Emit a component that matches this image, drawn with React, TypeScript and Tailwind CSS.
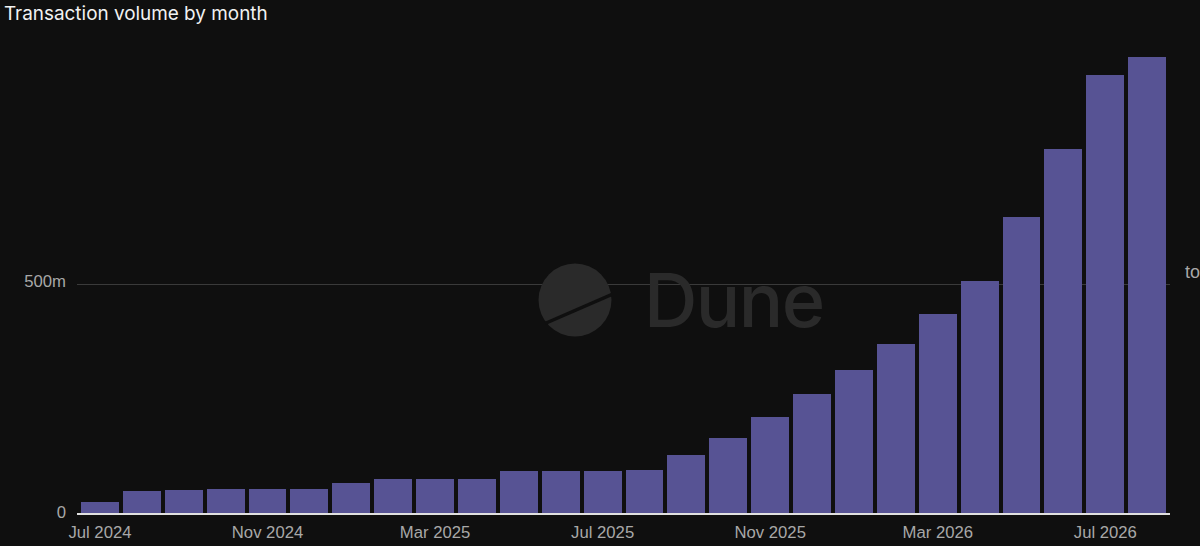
const tops = [502, 490.5, 489.5, 489, 489, 489, 483, 478.5, 478.5, 478.5, 470.5, 470.5, 470.5, 470, 455, 437.5, 417, 394, 370, 344, 314, 281, 217, 149, 74.5, 57];
const BASE = 514;
const labels: Record<number, string> = { 0: "Jul 2024", 4: "Nov 2024", 8: "Mar 2025", 12: "Jul 2025", 16: "Nov 2025", 20: "Mar 2026", 24: "Jul 2026" };

function Watermark() {
  return (
    <div className="absolute left-[461px] top-[233px] flex items-center">
      <svg width="74" height="74" viewBox="0 0 74 74" className="block">
        <circle cx="37" cy="37" r="36.5" fill="#2a2a2a" />
        <path d="M7 60.5 L75 31" stroke="#0f0f0f" strokeWidth="3.4" fill="none" />
      </svg>
      <span className="ml-[32px] text-[74px] leading-none tracking-[-1.6px] font-medium text-[#2a2a2a] font-['Inter',sans-serif]">Dune</span>
    </div>
  );
}

export default function App() {
  return (
    <div className="flex h-[546px] w-[1200px] flex-col overflow-hidden bg-[#0f0f0f] font-['Liberation_Sans',Arial,sans-serif]">
      <div className="h-[30px] pl-[4px] text-[18.9px] leading-[27px] text-[#f2f2f2] font-['Inter',sans-serif]">Transaction volume by month</div>
      <div className="flex">
        <div className="flex h-[484px] w-[77px] flex-col items-end pr-[11px] text-[16.7px] leading-[18px] text-[#a8a8a8]">
          <div className="mt-[243px]">500m</div>
          <div className="mt-[213px]">0</div>
        </div>
        <div className="relative h-[484px] w-[1093px]">
          <div className="absolute left-0 right-0 top-[253.5px] h-px bg-[#3a3a3a]" />
          <Watermark />
          <div className="relative flex h-full items-end gap-[4px] px-[4px]">
            {tops.map((t, i) => (
              <div key={i} className="flex-1 bg-[#575394]" style={{ height: BASE - t }} />
            ))}
          </div>
          <div className="absolute bottom-[-1px] left-0 right-0 h-[2px] bg-[#e0e0e0]" />
        </div>
        <div className="min-w-0 flex-1 overflow-hidden whitespace-nowrap pl-[15px] pt-[232px] text-[18px] leading-[20px] text-[#a8a8a8]">to</div>
      </div>
      <div className="ml-[77px] mt-[10px] flex w-[1093px] gap-[4px] px-[4px] text-[16.7px] leading-[18px] text-[#a8a8a8]">
        {tops.map((_, i) => (
          <div key={i} className="flex w-0 flex-1 justify-center whitespace-nowrap">
            {labels[i] ?? ""}
          </div>
        ))}
      </div>
    </div>
  );
}
